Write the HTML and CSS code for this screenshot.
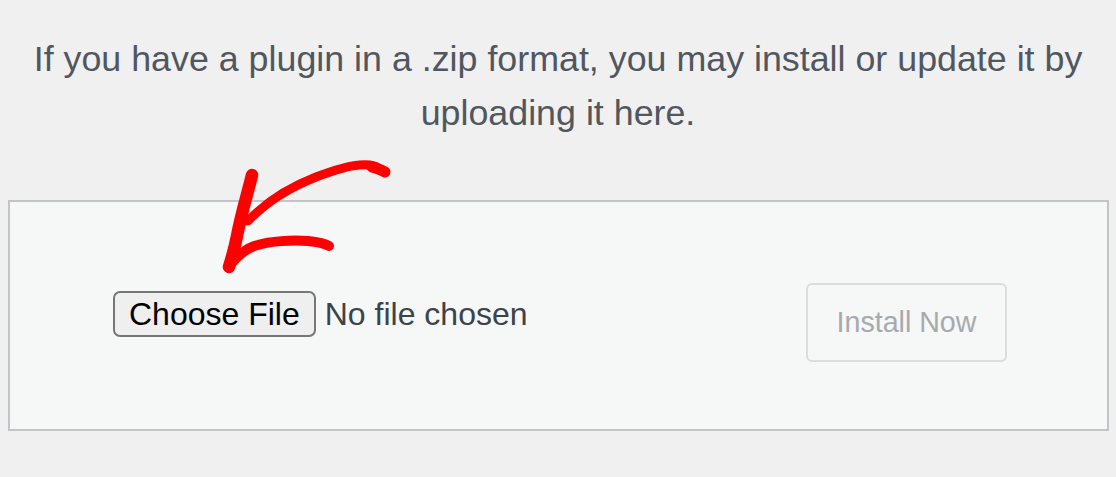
FILE: index.html
```html
<!DOCTYPE html>
<html lang="en">
<head>
<meta charset="utf-8">
<title>Upload Plugin</title>
<link rel="stylesheet" href="styles.css">
</head>
<body>
<div class="page">
  <p class="install-help">If you have a plugin in a .zip format, you may install or update it by uploading it here.</p>
  <form class="upload-form">
    <div class="file-field">
      <span class="file-button">Choose File</span>
      <span class="file-status">No file chosen</span>
    </div>
    <span class="install-button">Install Now</span>
  </form>
  <svg class="annotation" width="1116" height="477" viewBox="0 0 1116 477" aria-hidden="true">
    <g fill="none" stroke="#ff0000" stroke-linecap="round" stroke-linejoin="round">
      <path d="M252 175 C248 192 241 214 237 236 C234 251 231 260 229 267" stroke-width="12.5"/>
      <path d="M229 266 C236 258 245 248 258 245 C270 241 292 240 308 241 C318 242 324 243 329 246" stroke-width="10"/>
      <path d="M248 221 C267 201 293 186 316 177 C332 171 346 166 359 165 C369 164 376 166 378 168" stroke-width="9"/>
      <path d="M372 167 C377 168 381 170 385 172" stroke-width="11"/>
    </g>
  </svg>
</div>
</body>
</html>
```

FILE: styles.css
```css
html, body {
  margin: 0;
  padding: 0;
  background: #f0f0f1;
}

.page {
  position: relative;
  width: 1116px;
  height: 477px;
  overflow: hidden;
  font-family: "Liberation Sans", Arial, sans-serif;
}

.install-help {
  margin: 0;
  padding: 32px 0 0;
  text-align: center;
  color: #50575e;
  font-size: 35.8px;
  line-height: 54px;
}

.upload-form {
  margin: 60px 7px 0 8px;
  height: 231px;
  box-sizing: border-box;
  border: 2px solid #c3c4c7;
  background: #f6f7f7;
  display: flex;
  justify-content: space-between;
  align-items: flex-start;
  padding: 81px 100px 0 103px;
}

.file-field {
  display: flex;
  align-items: center;
  gap: 9px;
  margin-top: 8px;
}

.file-button {
  display: block;
  box-sizing: border-box;
  height: 46px;
  padding: 0 14px;
  border: 2px solid #767676;
  border-radius: 7px;
  background: #efefef;
  color: #000;
  font-size: 32px;
  line-height: 42px;
}

.file-status {
  color: #3c434a;
  font-size: 32px;
  line-height: 42px;
}

.install-button {
  display: flex;
  align-items: center;
  justify-content: center;
  box-sizing: border-box;
  width: 201px;
  height: 79px;
  border: 2px solid #dcdcde;
  border-radius: 6px;
  background: #f6f7f7;
  color: #a7aaad;
  font-size: 28.6px;
}

.annotation {
  position: absolute;
  left: 0;
  top: 0;
  pointer-events: none;
}
```
